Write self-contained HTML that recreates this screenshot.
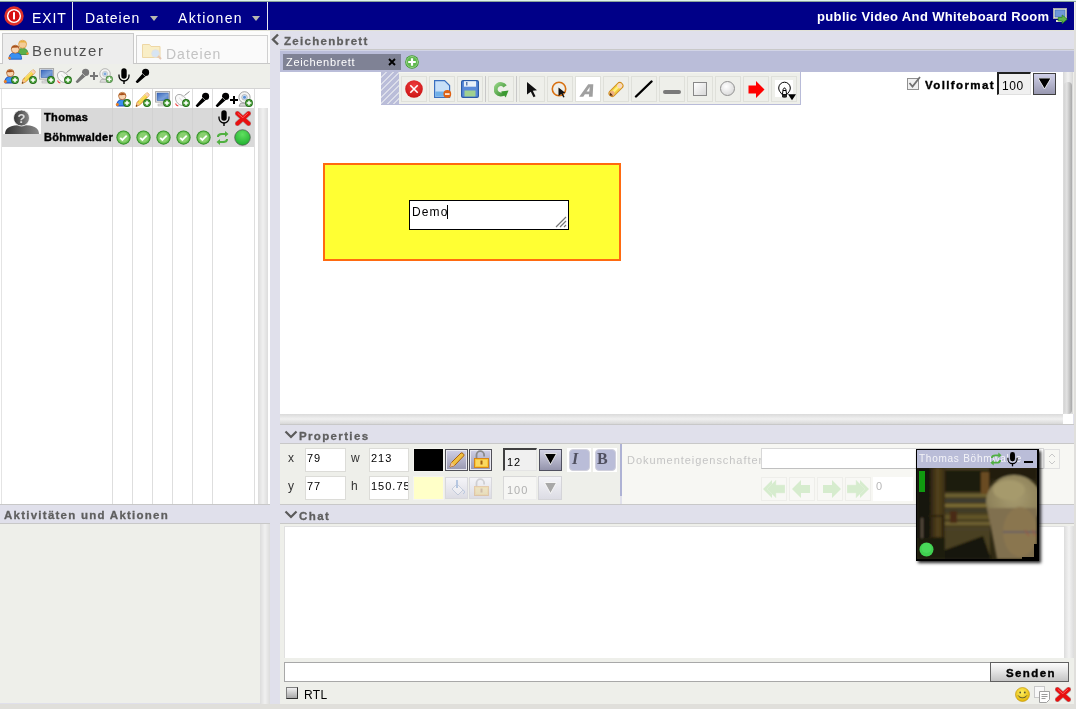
<!DOCTYPE html>
<html><head><meta charset="utf-8">
<style>
*{margin:0;padding:0;box-sizing:border-box}
html,body{width:1076px;height:709px;overflow:hidden;background:#e0e0eb;font-family:"Liberation Sans",sans-serif}
.a{position:absolute}
.hdr{color:#5f5f5f;font-weight:bold;font-size:12px;letter-spacing:0.6px;-webkit-text-stroke:0.3px #5f5f5f}
.inp{position:absolute;background:#fff;border:1px solid #dcdcd8;font-size:11px;color:#000;padding:3px 0 0 1px;letter-spacing:1px}
</style></head><body><div style="position:absolute;left:0;top:0;width:1076px;height:709px;overflow:hidden;will-change:transform">
<svg width="0" height="0" style="position:absolute"><defs>
<symbol id="pb" viewBox="0 0 8 8"><circle cx="4" cy="4" r="3.9" fill="#1e6a14"/><circle cx="4" cy="4" r="3.1" fill="#4aa03a"/><path d="M3.25 1.7h1.5v1.55H6.3v1.5H4.75V6.3h-1.5V4.75H1.7v-1.5h1.55z" fill="#fff"/></symbol>
<symbol id="user" viewBox="0 0 16 16"><path d="M1.8 15c0-4.5 2-6.5 5.5-6.5s5.5 2 5.5 6.5z" fill="#3a90f0" stroke="#1a3ab0" stroke-width="0.9"/><circle cx="7.3" cy="5" r="3.7" fill="#f8d4b0" stroke="#a85a20" stroke-width="0.7"/><path d="M3.6 5.2C3.2 1 11.5 1 11 5.2L10 3.8 6.5 4.2 4.5 4z" fill="#a8501a"/><circle cx="2.3" cy="13.6" r="1.5" fill="#f08020"/><use href="#pb" x="8" y="8" width="8" height="8"/></symbol>
<symbol id="pencil" viewBox="0 0 16 16"><path d="M1 15.5l1.3-4.3L11.2 2.3c1.2-1.1 3.6 1.2 2.5 2.5L4.8 13.8z" fill="#f8dc50" stroke="#d08020" stroke-width="1"/><path d="M4 9.5L12 1.8" stroke="#fff8b0" stroke-width="0.9"/><path d="M11.2 2.3c1.2-1.1 3.6 1.2 2.5 2.5l-1.2 1.2-2.5-2.5z" fill="#f8d0b8"/><path d="M1 15.5l1.3-4.3 2.5 2.6z" fill="#f8c090"/><path d="M1 15.5l.5-1.7 1.2 1.2z" fill="#402008"/><use href="#pb" x="8" y="8" width="8" height="8"/></symbol>
<symbol id="mon" viewBox="0 0 16 16"><defs><linearGradient id="scr" x1="0" y1="0" x2="1" y2="1"><stop offset="0" stop-color="#3a68c0"/><stop offset="0.6" stop-color="#7aa0d8"/><stop offset="1" stop-color="#4a78c8"/></linearGradient></defs><rect x="0.6" y="0.6" width="14" height="10.5" fill="#eeeeee" stroke="#a0a0a0" stroke-width="0.9"/><rect x="2" y="2" width="11.2" height="7.6" fill="url(#scr)" stroke="#3058a0" stroke-width="0.5"/><rect x="5.5" y="11.2" width="4" height="2" fill="#c8c8c8"/><rect x="3" y="13" width="9" height="2" fill="#e0e0e0" stroke="#a8a8a8" stroke-width="0.5"/><use href="#pb" x="8" y="8" width="8" height="8"/></symbol>
<symbol id="mouse" viewBox="0 0 16 16"><path d="M10.5 4.5L15.5 0.5" stroke="#909090" stroke-width="1"/><ellipse cx="7" cy="9" rx="4.6" ry="6.4" transform="rotate(-45 7 9)" fill="#fafafa" stroke="#a8a8a8" stroke-width="0.9"/><path d="M5.2 6.8l3.6 3.6M7.2 4.5L9 6.3" stroke="#c8c8c8" stroke-width="0.7"/><path d="M1.5 12.5c.5 1.3 1.5 2.2 2.8 2.4" stroke="#f04848" stroke-width="1.1" fill="none"/><use href="#pb" x="8" y="8" width="8" height="8"/></symbol>
<symbol id="mich" viewBox="0 0 16 16"><path d="M1.5 14.5l7-8 2 2-8 7z" fill="currentColor" stroke="currentColor" stroke-width="1.4" stroke-linejoin="round"/><circle cx="11.3" cy="4.7" r="3.8" fill="currentColor"/><path d="M7.5 5.5l3 3" stroke="#eeefea" stroke-width="0.7"/></symbol>
<symbol id="deskmic" viewBox="0 0 12 16"><rect x="3.3" y="0.3" width="5.4" height="10.5" rx="2.7" fill="#000"/><path d="M1 6.5v1.5a5 5 0 0 0 10 0V6.5" stroke="#000" stroke-width="1.3" fill="none"/><rect x="5.3" y="12.5" width="1.4" height="3.5" fill="#000"/></symbol>
<symbol id="cam" viewBox="0 0 16 16"><path d="M2 15.2l1.5-3h8l1.5 3z" fill="#d8d8d8" stroke="#8a8a8a" stroke-width="0.7"/><circle cx="7.5" cy="6.3" r="5.6" fill="#f4f4f4" stroke="#8a8a8a" stroke-width="0.8"/><circle cx="7.5" cy="6.3" r="2.8" fill="#d0e0f0" stroke="#a0a0a0" stroke-width="0.6"/><circle cx="7.5" cy="6.3" r="1.5" fill="#5a90d8"/><use href="#pb" x="8" y="8" width="8" height="8"/></symbol>
<symbol id="chk" viewBox="0 0 16 16"><circle cx="8" cy="8" r="7.6" fill="#2e8a22"/><circle cx="8" cy="8" r="6.6" fill="#66c050"/><circle cx="8" cy="8" r="5.4" fill="#8ad070"/><path d="M4.5 8.3l2.3 2.3 4.6-4.6" stroke="#fff" stroke-width="1.9" fill="none"/></symbol>
</defs></svg>

<!-- top bar -->
<div class="a" style="left:0;top:0;width:1076px;height:1px;background:#def2ea"></div>
<div class="a" style="left:0;top:1px;width:1076px;height:1px;background:#8aa49a"></div>
<div class="a" style="left:0;top:2px;width:1074px;height:28px;background:#000088"></div><div class="a" style="left:1074px;top:2px;width:1px;height:28px;background:#f0f0e8"></div>
<div class="a" style="left:72px;top:2px;width:1px;height:28px;background:#e8e8f0"></div>
<div class="a" style="left:267px;top:2px;width:1px;height:28px;background:#e8e8f0"></div>


<svg class="a" style="left:4px;top:6px" width="20" height="20" viewBox="0 0 20 20"><circle cx="10" cy="10" r="9.7" fill="#e0302a"/><circle cx="10" cy="10" r="6.3" fill="none" stroke="#fff" stroke-width="1.6"/><circle cx="10" cy="10" r="5.4" fill="#d81010"/><rect x="9" y="6.2" width="2" height="7.2" fill="#fff"/></svg>
<div class="a" style="left:32px;top:10px;font-size:14px;color:#fff;letter-spacing:0.9px">EXIT</div>
<div class="a" style="left:85px;top:10px;font-size:14px;color:#fff;letter-spacing:1.0px">Dateien</div>
<svg class="a" style="left:150px;top:16px" width="8" height="5"><path d="M0 0H8L4 5Z" fill="#b8b8b0"/></svg>
<div class="a" style="left:178px;top:10px;font-size:14px;color:#fff;letter-spacing:1.3px">Aktionen</div>
<svg class="a" style="left:252px;top:16px" width="8" height="5"><path d="M0 0H8L4 5Z" fill="#b8b8b0"/></svg>
<div class="a" style="left:817px;top:9px;font-size:13px;font-weight:bold;color:#fff;letter-spacing:0.36px;white-space:nowrap">public Video And Whiteboard Room</div>
<svg class="a" style="left:1053px;top:8px" width="16" height="16" viewBox="0 0 16 16"><rect x="0.5" y="0.5" width="13" height="10" fill="#e8e8d8" stroke="#b8b8a8" stroke-width="0.8"/><rect x="2" y="2" width="10" height="7" fill="#7098d8" stroke="#3a68b0" stroke-width="0.6"/><rect x="3" y="12" width="6" height="2" fill="#e0e0d0"/><path d="M5.2 9.5h4V7l5 4.2-5 4.3v-2.5h-4z" fill="#60b050" stroke="#2a8a20" stroke-width="0.8"/></svg>

<!-- left panel -->
<div class="a" style="left:0;top:30px;width:270px;height:34px;background:#fcfcfb"></div><div class="a" style="left:0;top:30px;width:1074px;height:1px;background:#e2e2d6"></div>
<div class="a" style="left:2px;top:33px;width:132px;height:32px;background:#ededed;border:1px solid #c9c9c9;border-bottom:none"></div>
<div class="a" style="left:136px;top:35px;width:132px;height:29px;background:#fafafa;border:1px solid #d0d0d0;border-bottom:none"></div>
<div class="a" style="left:0;top:64px;width:270px;height:24px;background:#eeefea"></div><div class="a" style="left:0;top:63px;width:3px;height:1px;background:#c8c8c8"></div><div class="a" style="left:133px;top:63px;width:137px;height:1px;background:#c8c8c8"></div>
<div class="a" style="left:0;top:88px;width:270px;height:416px;background:#fff;border-top:1px solid #d4d4d4"></div>
<div class="a" style="left:0;top:504px;width:270px;height:1px;background:#c8c8c8"></div>
<div class="a" style="left:0;top:505px;width:270px;height:18px;background:#e0e0eb"></div>
<div class="a" style="left:0;top:523px;width:270px;height:1px;background:#c8c8c8"></div>
<div class="a" style="left:0;top:524px;width:270px;height:179px;background:#eeefea"></div>


<svg class="a" style="left:8px;top:39px" width="21" height="21" viewBox="0 0 21 21"><path d="M9.5 15.5c0-4.5 1.8-6 5.2-6s5.2 1.5 5.2 6z" fill="#5cb04a" stroke="#3a8a2a" stroke-width="0.8"/><circle cx="14.6" cy="5.2" r="4" fill="#f4cc98" stroke="#d89840" stroke-width="0.7"/><path d="M10.7 5c-.3-4.5 8-4.5 7.8 0l-1.2-1.6-5.5.2z" fill="#e8b040"/><circle cx="19.5" cy="14.5" r="1.2" fill="#f09030"/><path d="M1 20.2c0-4.8 2.2-6.5 6.3-6.5s6.3 1.7 6.3 6.5z" fill="#3a90f0" stroke="#1a50b8" stroke-width="0.8"/><circle cx="7.3" cy="10.2" r="4" fill="#f8d4b0" stroke="#a85a20" stroke-width="0.7"/><path d="M3.4 10c-.3-4.6 8-4.6 7.8 0l-1.2-1.5-5.5.2z" fill="#a8501a"/><circle cx="1.6" cy="19" r="1.3" fill="#f08020"/></svg>
<div class="a" style="left:32px;top:42px;font-size:15px;color:#505050;letter-spacing:1.56px">Benutzer</div>
<svg class="a" style="left:142px;top:42px;opacity:0.7" width="20" height="18" viewBox="0 0 20 18"><path d="M0.5 2.5h7l1.5 2h9v11h-17.5z" fill="#f8e8b0" stroke="#e8c880" /><circle cx="13.5" cy="11.5" r="3.8" fill="#c8dcf0" stroke="#d8d8d8"/><path d="M16 14l3 3" stroke="#e0b090" stroke-width="2"/></svg>
<div class="a" style="left:166px;top:46px;font-size:14px;color:#c3c3c3;letter-spacing:1.0px">Dateien</div>
<svg class="a" style="left:3px;top:68px" width="16" height="16"><use href="#user" width="16" height="16"/></svg>
<svg class="a" style="left:21px;top:68px" width="16" height="16"><use href="#pencil" width="16" height="16"/></svg>
<svg class="a" style="left:39px;top:68px" width="16" height="16"><use href="#mon" width="16" height="16"/></svg>
<svg class="a" style="left:56px;top:68px" width="16" height="16"><use href="#mouse" width="16" height="16"/></svg>
<svg class="a" style="left:75px;top:68px;color:#777" width="15" height="15"><use href="#mich" width="15" height="15"/></svg>
<svg class="a" style="left:90px;top:72px" width="8" height="8"><path d="M3 0h2v3h3v2H5v3H3V5H0V3h3z" fill="#777"/></svg>
<svg class="a" style="left:98px;top:68px;opacity:0.75" width="15" height="15"><use href="#cam" width="15" height="15"/></svg>
<svg class="a" style="left:118px;top:68px" width="12" height="16"><use href="#deskmic" width="12" height="16"/></svg>
<svg class="a" style="left:135px;top:68px;color:#000" width="15" height="15"><use href="#mich" width="15" height="15"/></svg>

<div class="a" style="left:112px;top:89px;width:1px;height:415px;background:#dedede"></div>
<div class="a" style="left:132px;top:89px;width:1px;height:415px;background:#dedede"></div>
<div class="a" style="left:152px;top:89px;width:1px;height:415px;background:#dedede"></div>
<div class="a" style="left:172px;top:89px;width:1px;height:415px;background:#dedede"></div>
<div class="a" style="left:192px;top:89px;width:1px;height:415px;background:#dedede"></div>
<div class="a" style="left:212px;top:89px;width:1px;height:415px;background:#dedede"></div>
<div class="a" style="left:254px;top:89px;width:1px;height:415px;background:#dedede"></div>
<div class="a" style="left:1px;top:89px;width:1px;height:415px;background:#e4e4e4"></div>
<div class="a" style="left:2px;top:108px;width:252px;height:39px;background:#d9d9d9"></div>
<div class="a" style="left:112px;top:108px;width:1px;height:39px;background:#d2d2d2"></div>
<div class="a" style="left:132px;top:108px;width:1px;height:39px;background:#d2d2d2"></div>
<div class="a" style="left:152px;top:108px;width:1px;height:39px;background:#d2d2d2"></div>
<div class="a" style="left:172px;top:108px;width:1px;height:39px;background:#d2d2d2"></div>
<div class="a" style="left:192px;top:108px;width:1px;height:39px;background:#d2d2d2"></div>
<div class="a" style="left:212px;top:108px;width:1px;height:39px;background:#d2d2d2"></div>

<div class="a" style="left:258px;top:108px;width:10px;height:396px;background:linear-gradient(90deg,#dcdcdc,#f0f0f0 50%,#dcdcdc)"></div>
<div class="a" style="left:3px;top:109px;width:38px;height:25px;background:#fff"></div>
<svg class="a" style="left:3px;top:109px" width="38" height="25" viewBox="0 0 38 25"><defs><linearGradient id="av" x1="0" x2="1"><stop offset="0" stop-color="#333"/><stop offset="1" stop-color="#888"/></linearGradient></defs><path d="M2 25c0-6 5-9 17-9s17 3 17 9z" fill="url(#av)"/><circle cx="18.5" cy="9" r="8" fill="url(#av)" stroke="#fff" stroke-width="0.8"/><text x="18.5" y="14" font-family="Liberation Sans" font-weight="bold" font-size="13" fill="#ddd" text-anchor="middle">?</text></svg>
<div class="a" style="left:44px;top:111px;font-size:11px;font-weight:bold;color:#000;letter-spacing:0.35px;-webkit-text-stroke:0.4px #000">Thomas</div>
<div class="a" style="left:44px;top:131px;width:69px;overflow:hidden;white-space:nowrap;font-size:11px;font-weight:bold;color:#000;letter-spacing:0.3px;-webkit-text-stroke:0.4px #000">Böhmwalder</div>
<svg class="a" style="left:115px;top:91px" width="16" height="16"><use href="#user" width="16" height="16"/></svg>
<svg class="a" style="left:135px;top:91px" width="16" height="16"><use href="#pencil" width="16" height="16"/></svg>
<svg class="a" style="left:155px;top:91px" width="16" height="16"><use href="#mon" width="16" height="16"/></svg>
<svg class="a" style="left:174px;top:91px" width="16" height="16"><use href="#mouse" width="16" height="16"/></svg>
<svg class="a" style="left:195px;top:92px;color:#000" width="15" height="15"><use href="#mich" width="15" height="15"/></svg>
<svg class="a" style="left:215px;top:92px;color:#000" width="15" height="15"><use href="#mich" width="15" height="15"/></svg>
<svg class="a" style="left:230px;top:96px" width="8" height="8"><path d="M3 0h2v3h3v2H5v3H3V5H0V3h3z" fill="#000"/></svg>
<svg class="a" style="left:237px;top:91px" width="16" height="16"><use href="#cam" width="16" height="16"/></svg>
<svg class="a" style="left:218px;top:110px" width="12" height="16"><use href="#deskmic" width="12" height="16"/></svg>
<svg class="a" style="left:235px;top:111px" width="16" height="15" viewBox="0 0 16 15"><path d="M2.5 2.5l11 10M13.5 2.5l-11 10" stroke="#8a8a8a" stroke-width="5.6" stroke-linecap="round" opacity="0.55"/><path d="M2.5 2.5l11 10M13.5 2.5l-11 10" stroke="#e81010" stroke-width="4.2" stroke-linecap="round"/><path d="M3 2.5l4.5 4M12.5 2.5l-4 3.6" stroke="#ff6060" stroke-width="1" stroke-linecap="round"/></svg>
<svg class="a" style="left:115.5px;top:130px" width="15" height="15"><use href="#chk" width="15" height="15"/></svg>
<svg class="a" style="left:135.5px;top:130px" width="15" height="15"><use href="#chk" width="15" height="15"/></svg>
<svg class="a" style="left:155.5px;top:130px" width="15" height="15"><use href="#chk" width="15" height="15"/></svg>
<svg class="a" style="left:175.5px;top:130px" width="15" height="15"><use href="#chk" width="15" height="15"/></svg>
<svg class="a" style="left:195.5px;top:130px" width="15" height="15"><use href="#chk" width="15" height="15"/></svg>
<svg class="a" style="left:216px;top:131px" width="13" height="14" viewBox="0 0 13 14"><path d="M1 6c0-3 2-4 5-4h3V0l3.5 3L9 6V4H6c-2 0-3 1-3 2z" fill="#50b040"/><path d="M12 8c0 3-2 4-5 4H4v2L0.5 11 4 8v2h3c2 0 3-1 3-2z" fill="#50b040"/></svg>
<svg class="a" style="left:234px;top:129px" width="17" height="17" viewBox="0 0 17 17"><defs><radialGradient id="gc" cx="0.5" cy="0.3" r="0.7"><stop offset="0" stop-color="#60e060"/><stop offset="1" stop-color="#20b030"/></radialGradient></defs><circle cx="8.5" cy="8.5" r="7.8" fill="url(#gc)" stroke="#505050" stroke-width="0.7"/></svg>

<div class="a hdr" style="left:4px;top:509px;font-size:11.5px;letter-spacing:1.25px">Aktivitäten und Aktionen</div>
<div class="a" style="left:260px;top:524px;width:10px;height:180px;background:linear-gradient(90deg,#dcdcdc,#f0f0f0 50%,#dcdcdc)"></div>
<!-- right panel -->
<div class="a" style="left:280px;top:49px;width:794px;height:1px;background:#c8c8c8"></div>
<div class="a" style="left:280px;top:50px;width:794px;height:1px;background:#d2d4e6"></div><div class="a" style="left:280px;top:51px;width:794px;height:21px;background:#babdd9"></div>
<div class="a" style="left:280px;top:72px;width:794px;height:342px;background:#fff"></div>
<div class="a" style="left:1075px;top:2px;width:1px;height:707px;background:#e0dfdc"></div><div class="a" style="left:1074px;top:30px;width:1px;height:679px;background:#e0dfdc"></div><div class="a" style="left:1073px;top:72px;width:1px;height:342px;background:#eeeeea"></div>


<svg class="a" style="left:270px;top:33px" width="10" height="13" viewBox="0 0 10 13"><path d="M8 1.5L3 6.5 8 11.5" stroke="#5a5a5a" stroke-width="2.4" fill="none"/></svg>
<div class="a hdr" style="left:284px;top:35px;font-size:11.5px;letter-spacing:1.3px">Zeichenbrett</div>
<div class="a" style="left:283px;top:54px;width:118px;height:16px;background:#7f8295"></div>
<div class="a" style="left:286px;top:56px;font-size:11px;color:#fff;letter-spacing:0.68px">Zeichenbrett</div>
<svg class="a" style="left:388px;top:58px" width="8" height="8" viewBox="0 0 8 8"><path d="M1 1l6 6M7 1L1 7" stroke="#000" stroke-width="1.9"/></svg>
<svg class="a" style="left:405px;top:55px" width="14" height="14" viewBox="0 0 14 14"><circle cx="7" cy="7" r="6.8" fill="#3a9a2a"/><circle cx="7" cy="7" r="5.6" fill="#60b850" stroke="#b0e0a0" stroke-width="0.7"/><path d="M5.9 3.2h2.2v2.7h2.7v2.2H8.1v2.7H5.9V8.1H3.2V5.9h2.7z" fill="#fff"/></svg>
<!-- whiteboard -->
<div class="a" style="left:1063px;top:72px;width:10px;height:342px;background:linear-gradient(90deg,#d8d8d8,#f0f0f0 50%,#d8d8d8)"></div>
<div class="a" style="left:1064px;top:82px;width:8px;height:332px;border-radius:4px;background:linear-gradient(90deg,#d4d4d4,#e2e2e2 35%,#a8a8a8)"></div>
<div class="a" style="left:280px;top:414px;width:783px;height:10px;background:linear-gradient(180deg,#dadada,#f0f0f0 50%,#d8d8d8)"></div><div class="a" style="left:280px;top:424px;width:794px;height:1px;background:#c8c8c8"></div>
<div class="a" style="left:1063px;top:414px;width:10px;height:10px;background:#fff"></div>
<div class="a" style="left:323px;top:163px;width:298px;height:98px;background:#ffff33;border:2px solid #ff6a10"></div>
<div class="a" style="left:409px;top:200px;width:160px;height:30px;background:#fff;border:1px solid #000"></div>
<div class="a" style="left:412px;top:205px;font-size:12px;color:#000;letter-spacing:1.1px">Demo</div>
<div class="a" style="left:447px;top:205px;width:1px;height:14px;background:#000"></div>
<svg class="a" style="left:555px;top:214px" width="12" height="14" viewBox="0 0 12 14"><path d="M1 13L11 3M5 13l6-6M9 13l2-2" stroke="#777" stroke-width="1.2"/></svg>

<!-- toolbar -->
<div class="a" style="left:381px;top:72px;width:420px;height:33px;background:#b8bbd8"></div>
<div class="a" style="left:381px;top:72px;width:18px;height:32px;background:repeating-linear-gradient(135deg,#babdd9 0 3.2px,#dcdeea 3.2px 4.6px)"></div>
<div class="a" style="left:399px;top:72px;width:401px;height:32px;background:#eeefea;border-top:1px solid #f6f6f0"></div>
<div class="a" style="left:485px;top:76px;width:1px;height:26px;background:#c8c8c8"></div>
<div class="a" style="left:516px;top:76px;width:1px;height:26px;background:#c8c8c8"></div>
<div class="a" style="left:401px;top:76px;width:26px;height:26px;background:#eeefea;border:1px solid #dfe0da"></div>
<div class="a" style="left:429px;top:76px;width:26px;height:26px;background:#eeefea;border:1px solid #dfe0da"></div>
<div class="a" style="left:457px;top:76px;width:26px;height:26px;background:#eeefea;border:1px solid #dfe0da"></div>
<div class="a" style="left:488px;top:76px;width:26px;height:26px;background:#eeefea;border:1px solid #dfe0da"></div>
<div class="a" style="left:519px;top:76px;width:26px;height:26px;background:#eeefea;border:1px solid #dfe0da"></div>
<div class="a" style="left:547px;top:76px;width:26px;height:26px;background:#eeefea;border:1px solid #dfe0da"></div>
<div class="a" style="left:575px;top:76px;width:26px;height:26px;background:#fff;border:1px solid #dfe0da"></div>
<div class="a" style="left:603px;top:76px;width:26px;height:26px;background:#eeefea;border:1px solid #dfe0da"></div>
<div class="a" style="left:631px;top:76px;width:26px;height:26px;background:#eeefea;border:1px solid #dfe0da"></div>
<div class="a" style="left:659px;top:76px;width:26px;height:26px;background:#eeefea;border:1px solid #dfe0da"></div>
<div class="a" style="left:687px;top:76px;width:26px;height:26px;background:#eeefea;border:1px solid #dfe0da"></div>
<div class="a" style="left:715px;top:76px;width:26px;height:26px;background:#eeefea;border:1px solid #dfe0da"></div>
<div class="a" style="left:743px;top:76px;width:26px;height:26px;background:#eeefea;border:1px solid #dfe0da"></div>
<div class="a" style="left:771px;top:76px;width:26px;height:26px;background:#eeefea;border:1px solid #dfe0da"></div>

<svg class="a" style="left:405px;top:80px" width="18" height="18" viewBox="0 0 18 18"><defs><radialGradient id="rx" cx="0.5" cy="0.35" r="0.7"><stop offset="0" stop-color="#f04040"/><stop offset="1" stop-color="#c81010"/></radialGradient></defs><circle cx="9" cy="9" r="8.8" fill="url(#rx)"/><path d="M5.3 5.3l7.4 7.4M12.7 5.3l-7.4 7.4" stroke="#fff" stroke-width="1.6"/></svg>
<svg class="a" style="left:434px;top:80px" width="18" height="18" viewBox="0 0 18 18"><path d="M0.6 0.6h10l5 5v11.8H0.6z" fill="#c8e0f8" stroke="#3a70c0" stroke-width="1.2"/><rect x="1.3" y="11.5" width="13" height="5" fill="#70b0e8"/><circle cx="13.3" cy="14" r="3.9" fill="#e06010"/><rect x="11" y="13.3" width="4.6" height="1.5" fill="#fff"/></svg>
<svg class="a" style="left:461px;top:80px" width="18" height="18" viewBox="0 0 18 18"><rect x="0.6" y="0.6" width="16.8" height="16.8" rx="1.5" fill="#5a8ad8" stroke="#2a5aa8" stroke-width="1.2"/><rect x="3" y="1.2" width="12" height="5.5" fill="#e8f0f8"/><rect x="5" y="2" width="1.5" height="3.5" fill="#5a7ab0"/><rect x="3.5" y="10.5" width="11" height="6" fill="#a0d090"/></svg>
<svg class="a" style="left:494px;top:82px" width="15" height="16" viewBox="0 0 15 16"><defs><linearGradient id="rf" x1="0" y1="0" x2="1" y2="1"><stop offset="0" stop-color="#90d080"/><stop offset="1" stop-color="#3a9030"/></linearGradient></defs><path d="M11.1 4.3A5.2 5.2 0 1 0 10.4 11" stroke="url(#rf)" stroke-width="4" fill="none"/><path d="M7.2 9.6l7.3-1.2-2.8 7z" fill="#3a9a30"/></svg>
<svg class="a" style="left:526px;top:81px" width="12" height="17" viewBox="0 0 12 17"><path d="M1 1l10 8.3-4.2.5 2.7 5.5-2 1-2.7-5.5L1 13.5z" fill="#111"/></svg>
<svg class="a" style="left:551px;top:81px" width="18" height="18" viewBox="0 0 18 18"><circle cx="8" cy="8" r="6.7" stroke="#d87010" stroke-width="1.6" fill="none"/><path d="M7.5 6.5l7 5.5-2.8.3 1.9 3.6-1.3.6-1.9-3.6-2.9 2z" fill="#111"/></svg>
<svg class="a" style="left:579px;top:84px" width="15" height="13" viewBox="0 0 15 13"><path d="M0.3 12.7L9.2 0.3H14.3L13.6 12.7H9.9L10.1 10.3H5.9L4.3 12.7ZM7.6 7.6H10.3L10.7 3Z" fill="#a0a0a0" fill-rule="evenodd"/></svg>
<svg class="a" style="left:606px;top:80px" width="20" height="19" viewBox="0 0 20 19"><g transform="rotate(-45 10 9.5)"><rect x="1.5" y="6.3" width="17" height="6.4" rx="3.2" fill="#f0d040" stroke="#d08a20" stroke-width="1"/><rect x="5" y="8" width="9" height="2.4" fill="#fff080"/><circle cx="15.3" cy="9.5" r="2.6" fill="#f8d8c0"/><circle cx="4.5" cy="9.5" r="2.6" fill="#f0b080"/><path d="M1.2 9.5l2.5-2.2v4.4z" fill="#5a3010"/></g></svg>
<svg class="a" style="left:634px;top:80px" width="20" height="18" viewBox="0 0 20 18"><path d="M2 16.5L17.5 1.5" stroke="#000" stroke-width="2.4" stroke-linecap="round"/></svg>
<div class="a" style="left:663px;top:90px;width:18px;height:4px;border-radius:2px;background:#7a7a7a"></div>
<div class="a" style="left:693px;top:82px;width:14px;height:14px;background:linear-gradient(135deg,#fff,#d8d8d8);border:1px solid #888"></div>
<div class="a" style="left:720px;top:81px;width:15px;height:15px;border-radius:50%;background:radial-gradient(circle at 40% 35%,#fff,#d0d0d0);border:1px solid #909090"></div>
<svg class="a" style="left:748px;top:81px" width="17" height="17" viewBox="0 0 17 17"><path d="M0.5 4.5H8V0l8.5 8.5L8 17v-4.5H0.5z" fill="#ff0000"/></svg>
<div class="a" style="left:775px;top:80px;width:18px;height:17px;background:#fff"></div>
<svg class="a" style="left:776px;top:80px" width="21" height="21" viewBox="0 0 21 21"><path d="M6 14.5c-1-2-3.3-3.2-3.3-6.5a5.8 5.8 0 0 1 11.6 0c0 3.3-2.3 4.5-3.3 6.5z" fill="none" stroke="#000" stroke-width="1"/><path d="M6 14.5h5v1.8a2.5 1.5 0 0 1-5 0z" fill="#222"/><path d="M6.5 14l.6-4.5 1.4-1.8 1.4 1.8.6 4.5M7 10.5h3" stroke="#000" stroke-width="1" fill="none"/><path d="M12 14.2h8l-4 6z" fill="#000"/></svg>


<!-- properties -->
<div class="a" style="left:280px;top:425px;width:794px;height:18px;background:#e0e0eb"></div>
<div class="a" style="left:280px;top:443px;width:794px;height:1px;background:#c8c8c8"></div>
<svg class="a" style="left:284px;top:430px" width="14" height="9" viewBox="0 0 14 9"><path d="M1.5 1.5l5.5 5.5 5.5-5.5" stroke="#5a5a5a" stroke-width="2.2" fill="none"/></svg>
<div class="a hdr" style="left:299px;top:430px;font-size:11.5px;letter-spacing:1.35px">Properties</div>
<div class="a" style="left:280px;top:444px;width:340px;height:60px;background:#eeefea"></div>
<div class="a" style="left:620px;top:444px;width:2px;height:52px;background:#aeb2d4"></div>
<div class="a" style="left:622px;top:444px;width:452px;height:60px;background:#f7f7f3"></div>

<div class="a" style="left:288px;top:451px;font-size:12px;color:#333">x</div>
<div class="a" style="left:288px;top:479px;font-size:12px;color:#333">y</div>
<div class="a" style="left:351px;top:451px;font-size:12px;color:#333">w</div>
<div class="a" style="left:351px;top:479px;font-size:12px;color:#333">h</div>
<div class="inp" style="left:305px;top:448px;width:41px;height:24px">79</div>
<div class="inp" style="left:305px;top:476px;width:41px;height:24px">77</div>
<div class="inp" style="left:369px;top:448px;width:40px;height:24px">213</div>
<div class="inp" style="left:369px;top:476px;width:40px;height:24px;overflow:hidden;white-space:nowrap">150.75</div>
<div class="a" style="left:413px;top:448px;width:31px;height:24px;background:#000;border:1px solid #f4f4f0"></div>
<div class="a" style="left:413px;top:476px;width:31px;height:24px;background:#ffffc8;border:1px solid #f4f4f0"></div>
<div class="a" style="left:445px;top:449px;width:23px;height:22px;background:linear-gradient(180deg,#d0d0e6,#9898b0);border:1px solid #505058;box-shadow:inset 0 0 0 1px #e8e8f0"></div>
<div class="a" style="left:469px;top:449px;width:23px;height:22px;background:linear-gradient(180deg,#d0d0e6,#9898b0);border:1px solid #505058;box-shadow:inset 0 0 0 1px #e8e8f0"></div>
<div class="a" style="left:445px;top:477px;width:23px;height:22px;background:linear-gradient(180deg,#f4f4f8,#dcdce4);border:1px solid #d8d8dc"></div>
<div class="a" style="left:469px;top:477px;width:23px;height:22px;background:linear-gradient(180deg,#f4f4f8,#dcdce4);border:1px solid #d8d8dc"></div>
<svg class="a" style="left:448px;top:451px" width="18" height="18" viewBox="0 0 18 18"><path d="M2 16l1.5-4.5L13 2c1-.9 3.8 1.6 2.8 2.8L6.5 14.5z" fill="#f0c040" stroke="#a86010" stroke-width="1"/><path d="M2 16l1.5-4.5 3 3z" fill="#f0c090"/></svg>
<svg class="a" style="left:472px;top:450px" width="18" height="19" viewBox="0 0 18 19"><path d="M4.5 9V5a3.8 3.8 0 0 1 7.6 0v1.5" stroke="#8a8a8a" stroke-width="1.8" fill="none"/><rect x="2.5" y="8.5" width="14" height="9" fill="#f8c838" stroke="#d88010" stroke-width="0.9"/><path d="M4 11h11M4 13h11M4 15h11" stroke="#fff0a0" stroke-width="0.8"/><rect x="8.5" y="10.5" width="2" height="4" fill="#a06010"/></svg>
<svg class="a" style="left:449px;top:479px;opacity:0.35" width="17" height="18" viewBox="0 0 17 18"><path d="M3 10l5-5 6 6-5 5z" fill="#fff" stroke="#8aa0c0"/><path d="M8 1v8" stroke="#5080c0" stroke-width="2"/><path d="M14 11c2 1 2 3 0 4" stroke="#5080c0" fill="none"/></svg>
<svg class="a" style="left:472px;top:478px;opacity:0.3" width="18" height="19" viewBox="0 0 18 19"><path d="M4.5 9V5a3.8 3.8 0 0 1 7.6 0v1.5" stroke="#8a8a8a" stroke-width="1.8" fill="none"/><rect x="2.5" y="8.5" width="14" height="9" fill="#f8c838" stroke="#d88010" stroke-width="0.9"/><path d="M4 11h11M4 13h11M4 15h11" stroke="#fff0a0" stroke-width="0.8"/><rect x="8.5" y="10.5" width="2" height="4" fill="#a06010"/></svg>
<div class="a" style="left:503px;top:448px;width:34px;height:23px;background:#f0f0f0;border-top:2px solid #404040;border-left:2px solid #404040;border-right:1px solid #e4e4e4;border-bottom:1px solid #e4e4e4"></div>
<div class="a" style="left:507px;top:456px;font-size:11px;color:#000;letter-spacing:1px">12</div>
<div class="a" style="left:539px;top:449px;width:23px;height:22px;background:linear-gradient(180deg,#d4d4e6,#9494ac);border:1px solid #505060"></div>
<svg class="a" style="left:544px;top:453px" width="13" height="12"><path d="M0.5 0.5H12.5L6.5 11.5Z" fill="#000" stroke="#fff" stroke-width="0.8"/></svg>
<div class="a" style="left:503px;top:476px;width:34px;height:24px;background:#f6f6f4;border-top:1px solid #d8d8d8;border-left:1px solid #d8d8d8;border-right:1px solid #ececec;border-bottom:1px solid #ececec"></div>
<div class="a" style="left:507px;top:484px;font-size:11px;color:#b0b0b0;letter-spacing:1px">100</div>
<div class="a" style="left:538px;top:476px;width:24px;height:24px;background:linear-gradient(180deg,#f4f4f8,#dcdce4);border:1px solid #d4d4d8"></div>
<svg class="a" style="left:544px;top:482px" width="13" height="12"><path d="M0.5 0.5H12.5L6.5 11.5Z" fill="#a8a8a8" stroke="#fff" stroke-width="0.8"/></svg>
<div class="a" style="left:567px;top:448px;width:24px;height:24px;background:#fff"></div><div class="a" style="left:569px;top:449px;width:21px;height:22px;background:#babdd8;border:1px solid #d0d0dc;border-radius:4px"></div>
<div class="a" style="left:593px;top:448px;width:24px;height:24px;background:#fff"></div><div class="a" style="left:595px;top:449px;width:21px;height:22px;background:#babdd8;border:1px solid #d0d0dc;border-radius:4px"></div>
<div class="a" style="left:572px;top:450px;font-family:'Liberation Serif',serif;font-size:16px;font-style:italic;font-weight:bold;color:#505060">I</div>
<div class="a" style="left:597px;top:450px;font-family:'Liberation Serif',serif;font-size:16px;font-weight:bold;color:#505060">B</div>
<div class="a" style="left:627px;top:454px;font-size:11px;color:#c4c4c4;letter-spacing:0.95px;white-space:nowrap">Dokumenteigenschaften</div>
<div class="a" style="left:761px;top:448px;width:283px;height:21px;background:#fff;border:1px solid #d8d8d8;border-bottom-color:#c0c0c0"></div>
<div class="a" style="left:761px;top:477px;width:26px;height:24px;background:#f8f8f5;border:1px solid #eeeeea"></div>
<div class="a" style="left:789px;top:477px;width:26px;height:24px;background:#f8f8f5;border:1px solid #eeeeea"></div>
<div class="a" style="left:817px;top:477px;width:26px;height:24px;background:#f8f8f5;border:1px solid #eeeeea"></div>
<div class="a" style="left:845px;top:477px;width:26px;height:24px;background:#f8f8f5;border:1px solid #eeeeea"></div>

<svg class="a" style="left:763px;top:480px" width="22" height="18" viewBox="0 0 22 18"><path d="M0 9L9 0v5h1.5L10 9l.5 4H9v5z" fill="#d6ecce"/><path d="M4 9l9-9v5h9v8h-9v5z" fill="#d6ecce" stroke="#e4f2de" stroke-width="0.5"/></svg>
<svg class="a" style="left:792px;top:480px" width="19" height="18" viewBox="0 0 19 18"><path d="M0 9l9-9v5h9v8H9v5z" fill="#d6ecce"/></svg>
<svg class="a" style="left:822px;top:480px" width="19" height="18" viewBox="0 0 19 18"><path d="M19 9l-9-9v5H1v8h9v5z" fill="#d6ecce"/></svg>
<svg class="a" style="left:847px;top:480px" width="22" height="18" viewBox="0 0 22 18"><path d="M22 9l-9-9v5h-1.5l.5 4-.5 4H13v5z" fill="#d6ecce"/><path d="M18 9L9 0v5H0v8h9v5z" fill="#d6ecce" stroke="#e4f2de" stroke-width="0.5"/></svg>
<div class="a" style="left:873px;top:477px;width:40px;height:24px;background:#fff"></div>
<div class="a" style="left:876px;top:480px;font-size:11px;color:#b8b8b8">0</div>
<div class="a" style="left:1044px;top:449px;width:16px;height:20px;background:#f7f7f3;border:1px solid #e0e0e0"></div>
<svg class="a" style="left:1048px;top:452px" width="8" height="14"><path d="M1 5l3-3 3 3M1 9l3 3 3-3" stroke="#c8c8c8" fill="none"/></svg>
<!-- chat -->
<div class="a" style="left:280px;top:504px;width:794px;height:1px;background:#c8c8c8"></div>
<div class="a" style="left:280px;top:523px;width:794px;height:1px;background:#c8c8c8"></div>
<svg class="a" style="left:284px;top:510px" width="14" height="9" viewBox="0 0 14 9"><path d="M1.5 1.5l5.5 5.5 5.5-5.5" stroke="#5a5a5a" stroke-width="2.2" fill="none"/></svg>
<div class="a hdr" style="left:299px;top:510px;font-size:11.5px;letter-spacing:1.4px">Chat</div>
<div class="a" style="left:280px;top:524px;width:794px;height:180px;background:#eeefea"></div>
<div class="a" style="left:284px;top:526px;width:780px;height:132px;background:#fff;border-left:1px solid #e0e0e0;border-top:1px solid #e0e0e0"></div>
<div class="a" style="left:1064px;top:526px;width:10px;height:132px;background:linear-gradient(90deg,#dcdcdc,#f2f2f2 50%,#dcdcdc)"></div>
<div class="a" style="left:284px;top:662px;width:707px;height:20px;background:#fff;border:1px solid #a8a8a8"></div>
<div class="a" style="left:990px;top:662px;width:79px;height:20px;background:linear-gradient(180deg,#fcfcfc,#e8e8e8 40%,#c4c4c4);border:1px solid #606060"></div>
<div class="a" style="left:1006px;top:667px;font-size:11.5px;font-weight:bold;color:#000;letter-spacing:1.4px;-webkit-text-stroke:0.35px #000">Senden</div>
<div class="a" style="left:286px;top:687px;width:12px;height:12px;background:linear-gradient(180deg,#f0f0f0,#a8a8a8);border:1px solid #303030;border-top-color:#808080;border-left-color:#808080"></div>
<div class="a" style="left:304px;top:688px;font-size:12px;color:#000;letter-spacing:0.3px">RTL</div>
<svg class="a" style="left:1015px;top:687px" width="15" height="15" viewBox="0 0 15 15"><defs><radialGradient id="sm" cx="0.45" cy="0.35" r="0.7"><stop offset="0" stop-color="#fff060"/><stop offset="1" stop-color="#e0b000"/></radialGradient></defs><circle cx="7.5" cy="7.5" r="7" fill="url(#sm)" stroke="#c09000" stroke-width="0.6"/><circle cx="5.2" cy="5.5" r="0.9" fill="#553"/><circle cx="9.8" cy="5.5" r="0.9" fill="#553"/><path d="M3.2 8.5c1.5 3 7 3 8.6 0" stroke="#553" stroke-width="1" fill="none"/></svg>
<svg class="a" style="left:1034px;top:686px" width="17" height="17" viewBox="0 0 17 17"><rect x="0.5" y="0.5" width="10" height="11" fill="#f8f8f8" stroke="#c8c8c8"/><path d="M5.5 5.5h10v8l-3 3h-7z" fill="#fff" stroke="#a0a0a0"/><path d="M7.5 8.5h6M7.5 10.5h6M7.5 12.5h4" stroke="#909090" stroke-width="0.9"/></svg>
<svg class="a" style="left:1055px;top:687px" width="16" height="15" viewBox="0 0 16 15"><path d="M2.5 2.5l11 10M13.5 2.5l-11 10" stroke="#8a8a8a" stroke-width="5.6" stroke-linecap="round" opacity="0.55"/><path d="M2.5 2.5l11 10M13.5 2.5l-11 10" stroke="#e81010" stroke-width="4.2" stroke-linecap="round"/><path d="M3 2.5l4.5 4M12.5 2.5l-4 3.6" stroke="#ff6060" stroke-width="1" stroke-linecap="round"/></svg>
<div class="a" style="left:0;top:704px;width:1076px;height:5px;background:#e0dfdb"></div>


<!-- video window -->
<div class="a" style="left:916px;top:449px;width:123px;height:112px;background:#000;box-shadow:2px 2px 3px 0 rgba(0,0,0,0.85)"></div>
<div class="a" style="left:917px;top:450px;width:120px;height:18px;background:#babdd8"></div>
<div class="a" style="left:919px;top:453px;font-size:10px;color:#f4f4f8;letter-spacing:0.75px;white-space:nowrap;width:103px;overflow:hidden">Thomas Böhmwalder</div>
<svg class="a" style="left:990px;top:452px" width="12" height="14" viewBox="0 0 13 14"><path d="M1 6c0-3 2-4 5-4h3V0l3.5 3L9 6V4H6c-2 0-3 1-3 2z" fill="#50b040"/><path d="M12 8c0 3-2 4-5 4H4v2L0.5 11 4 8v2h3c2 0 3-1 3-2z" fill="#50b040"/></svg>
<svg class="a" style="left:1007px;top:451px" width="11" height="16"><use href="#deskmic" width="11" height="16"/></svg>
<div class="a" style="left:1024px;top:461px;width:9px;height:2px;background:#000"></div>
<svg class="a" style="left:917px;top:468px" width="120" height="91" viewBox="0 0 120 91">
<defs><filter id="bl" x="-10%" y="-10%" width="120%" height="120%"><feGaussianBlur stdDeviation="1.2"/></filter>
<radialGradient id="hair" cx="0.5" cy="0.4" r="0.6"><stop offset="0" stop-color="#a89c70"/><stop offset="0.8" stop-color="#8e825a"/><stop offset="1" stop-color="#5a4e30"/></radialGradient>
<linearGradient id="pil" x1="0" x2="1"><stop offset="0" stop-color="#2a2010"/><stop offset="0.5" stop-color="#54421c"/><stop offset="1" stop-color="#3a2e12"/></linearGradient></defs>
<rect width="120" height="91" fill="#2e2812"/>
<g filter="url(#bl)">
<rect x="0" y="0" width="13" height="91" fill="#14140a"/>
<rect x="13" y="0" width="15" height="91" fill="url(#pil)"/>
<rect x="28" y="0" width="45" height="91" fill="#4a4020"/>
<rect x="28" y="2" width="45" height="22" fill="#1c1a10"/>
<rect x="64" y="4" width="8" height="22" fill="#6a4c22"/>
<rect x="28" y="26" width="45" height="3" fill="#6e6232"/>
<rect x="28" y="31" width="45" height="3" fill="#3a3a30"/>
<rect x="28" y="36" width="45" height="3" fill="#7a6a34"/>
<rect x="28" y="41" width="45" height="3" fill="#3e3a28"/>
<rect x="28" y="47" width="45" height="4" fill="#625428"/>
<rect x="28" y="54" width="45" height="3" fill="#6e6032"/>
<rect x="28" y="60" width="45" height="3" fill="#4a4028"/>
<rect x="33" y="43" width="7" height="12" fill="#4a2a14"/>
<rect x="72" y="0" width="48" height="12" fill="#201c10"/>
<path d="M12 48h14v22H12" stroke="#2a2010" stroke-width="2" fill="none"/>
<path d="M5 50v28" stroke="#5a5040" stroke-width="2"/>
<path d="M28 91V82l38-14 8 23z" fill="#16140c"/>
<path d="M0 70h28v21H0z" fill="#1c1a0e"/>
<ellipse cx="97" cy="34" rx="28" ry="27" fill="url(#hair)"/>
<path d="M70 40c4 20 8 40 10 51h40V40z" fill="#807050"/>
<ellipse cx="103" cy="64" rx="17" ry="25" fill="#8a7650"/>
<ellipse cx="92" cy="22" rx="16" ry="10" fill="#a69a6c"/>
<path d="M86 64h34" stroke="#6a6060" stroke-width="2.2"/>
<path d="M108 62l4 6M116 62l2 6" stroke="#a05040" stroke-width="1"/>
</g>
<rect x="117" y="76" width="3" height="15" fill="#000"/><rect x="105" y="89" width="15" height="2" fill="#000"/>
<rect x="2" y="3" width="6" height="21" fill="#109a10"/>
<circle cx="9.5" cy="81.5" r="7" fill="#40d050"/>
<circle cx="9.5" cy="80" r="5" fill="#50e060" opacity="0.6"/>
</svg>

<!-- vollformat -->
<svg class="a" style="left:907px;top:76px" width="14" height="14" viewBox="0 0 14 14"><rect x="0.5" y="2.5" width="11" height="11" fill="#f0f0f0" stroke="#909090"/><path d="M2.5 7l3 3.5L13 1" stroke="#707070" stroke-width="1.8" fill="none"/></svg>
<div class="a" style="left:925px;top:79px;font-size:11.5px;font-weight:bold;color:#000;letter-spacing:1.4px;-webkit-text-stroke:0.35px #000">Vollformat</div>
<div class="a" style="left:997px;top:72px;width:34px;height:23px;background:#f0f0f0;border-top:2px solid #202020;border-left:2px solid #202020;border-right:1px solid #e0e0e0;border-bottom:1px solid #e0e0e0"></div>
<div class="a" style="left:1002px;top:79px;font-size:12px;color:#000;letter-spacing:0.6px">100</div>
<div class="a" style="left:1033px;top:73px;width:23px;height:22px;background:linear-gradient(180deg,#d0d0e8,#9898b0);border:1px solid #404040"></div>
<svg class="a" style="left:1038px;top:78px" width="13" height="11"><path d="M0 0H13L6.5 11Z" fill="#000" stroke="#fff" stroke-width="0.8"/></svg>

</div></body></html>
